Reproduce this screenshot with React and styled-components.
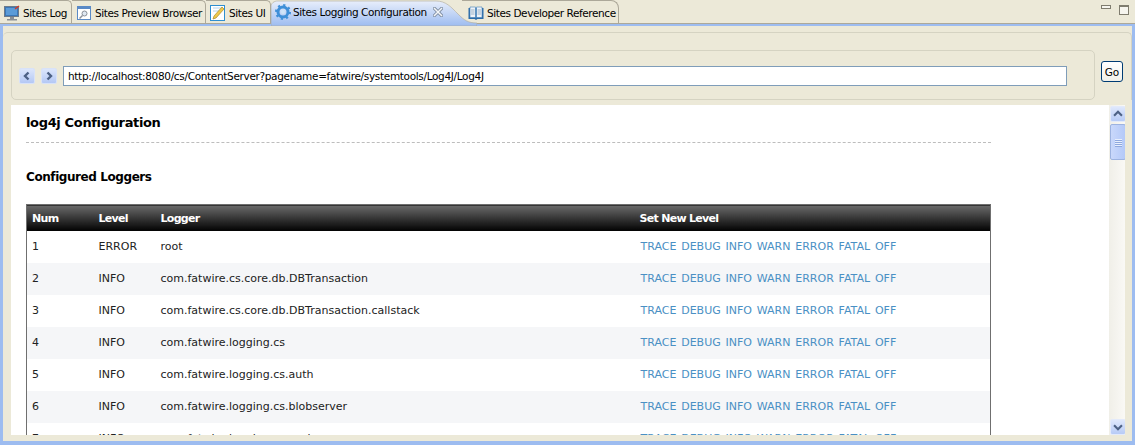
import React from "react"
import styled, { createGlobalStyle } from "styled-components"

const loggers = [
  ["1", "ERROR", "root"],
  ["2", "INFO", "com.fatwire.cs.core.db.DBTransaction"],
  ["3", "INFO", "com.fatwire.cs.core.db.DBTransaction.callstack"],
  ["4", "INFO", "com.fatwire.logging.cs"],
  ["5", "INFO", "com.fatwire.logging.cs.auth"],
  ["6", "INFO", "com.fatwire.logging.cs.blobserver"],
  ["7", "INFO", "com.fatwire.logging.cs.cache"],
]
const levels = ["TRACE", "DEBUG", "INFO", "WARN", "ERROR", "FATAL", "OFF"]

const LogIcon = () => (
  <svg width="16" height="16" viewBox="0 0 16 16">
    <rect x="0.5" y="1.5" width="14" height="10" fill="#3b78b8" stroke="#6c7a8a" />
    <rect x="2" y="3" width="11" height="7" fill="#5b9bd8" />
    <path d="M6 12h4v2H6zM3 14h10v1.5H3z" fill="#8a8f96" />
    <path d="M11 4l4-3" stroke="#d23c2a" strokeWidth="1.5" />
  </svg>
)
const BrowserIcon = () => (
  <svg width="16" height="16" viewBox="0 0 16 16">
    <rect x="1.5" y="1.5" width="13" height="13" fill="#fff" stroke="#5a8ac6" />
    <rect x="1.5" y="1.5" width="13" height="2.5" fill="#5a8ac6" />
    <circle cx="8.5" cy="8.5" r="2.5" fill="#dfe8f2" stroke="#8a9099" />
    <path d="M6.5 10.5L3.5 13.5" stroke="#8a9099" strokeWidth="1.5" />
  </svg>
)
const EditIcon = () => (
  <svg width="16" height="16" viewBox="0 0 16 16">
    <rect x="0.5" y="0.5" width="14" height="15" fill="#fff" stroke="#2f8fd0" />
    <path d="M3 3h9M3 6h6" stroke="#b8d4ea" />
    <path d="M3 14l1-3 8-9 2 2-8 9z" fill="#f0c94a" stroke="#a88a2a" strokeWidth="0.7" />
  </svg>
)
const GearIcon = () => (
  <svg width="16" height="16" viewBox="0 0 16 16">
    <circle cx="8" cy="8" r="5" fill="none" stroke="#3f8fd8" strokeWidth="3" />
    <circle cx="8" cy="8" r="7" fill="none" stroke="#3f8fd8" strokeWidth="2" strokeDasharray="2.2 3.3" />
    <circle cx="8" cy="8" r="2" fill="#cfe4f8" />
  </svg>
)
const BookIcon = () => (
  <svg width="16" height="16" viewBox="0 0 16 16">
    <path d="M0.5 3h15v11h-6l-1.5 1-1.5-1h-6z" fill="#2c6ca8" />
    <path d="M2 2h5.5v10.500H2zM8.500 2H14v10.500H8.500z" fill="#eef3f8" stroke="#3f7fb8" strokeWidth="0.6" />
    <path d="M3 5h3.500M3 7h3.500M3 9h3.500M9.500 5H13M9.500 7H13M9.500 9H13" stroke="#9db4c8" />
  </svg>
)
const CloseIcon = () => (
  <svg width="10" height="10" viewBox="0 0 10 10">
    <path d="M1.500 1.500l7 7M8.500 1.500l-7 7" stroke="#7f8ea3" strokeWidth="3.200" strokeLinecap="square" />
    <path d="M1.500 1.500l7 7M8.500 1.500l-7 7" stroke="#f4f6f8" strokeWidth="1.500" strokeLinecap="square" />
  </svg>
)
const Chevron = ({ dir }) => {
  const paths = {
    left: "M8.500 3.500L5 7l3.500 3.500",
    right: "M5.500 3.500L9 7l-3.500 3.500",
    up: "M3.500 9L8 4.500 12.500 9",
    down: "M3.500 5L8 9.500 12.500 5",
  }
  return (
    <svg width={dir === "left" || dir === "right" ? 14 : 16} height="14" viewBox={dir === "left" || dir === "right" ? "0 0 14 14" : "0 0 16 14"}>
      <path d={paths[dir]} fill="none" stroke="#4d6185" strokeWidth="2.400" />
    </svg>
  )
}

export default function App() {
  return (
    <>
      <GlobalStyle />
      <Window>
        <TabBar>
          <Tab $width={72}><LogIcon /><span>Sites Log</span></Tab>
          <Tab $width={134}><BrowserIcon /><span>Sites Preview Browser</span></Tab>
          <Tab $width={65}><EditIcon /><span>Sites UI</span></Tab>
          <ActiveTab>
            <ActiveShape width="206" height="26" viewBox="0 0 206 26">
              <defs>
                <linearGradient id="activeTabFill" x1="0" y1="0" x2="0" y2="1">
                  <stop offset="0" stopColor="#e8eefb" />
                  <stop offset="1" stopColor="#9dbcf0" />
                </linearGradient>
              </defs>
              <path
                d="M0 26V7C0 3 3 1 7 1H165C175 1 180 7 187 14C193 20 197 23 206 23V26Z"
                fill="url(#activeTabFill)"
                stroke="#aca899"
                strokeWidth="0.6"
              />
            </ActiveShape>
            <GearIcon />
            <ActiveLabel>Sites Logging Configuration</ActiveLabel>
            <CloseIcon />
          </ActiveTab>
          <LastTab><BookIcon /><span>Sites Developer Reference</span></LastTab>
          <ViewControls>
            <MinimizeBox />
            <MaximizeBox />
          </ViewControls>
        </TabBar>
        <Frame>
          <Panel>
            <ToolbarRow>
              <ToolbarGroup>
                <NavButton aria-label="Back"><Chevron dir="left" /></NavButton>
                <NavButton aria-label="Forward"><Chevron dir="right" /></NavButton>
                <UrlInput readOnly value="http://localhost:8080/cs/ContentServer?pagename=fatwire/systemtools/Log4J/Log4J" />
              </ToolbarGroup>
              <GoButton>Go</GoButton>
            </ToolbarRow>
            <BrowserArea>
              <Page>
                <Title>log4j Configuration</Title>
                <Divider />
                <Subtitle>Configured Loggers</Subtitle>
                <LoggerTable>
                  <thead>
                    <tr>
                      <HeadCell $width={67}>Num</HeadCell>
                      <HeadCell $width={62}>Level</HeadCell>
                      <HeadCell $width={479}>Logger</HeadCell>
                      <HeadCell>Set New Level</HeadCell>
                    </tr>
                  </thead>
                  <tbody>
                    {loggers.map(([num, level, name]) => (
                      <Row key={num}>
                        <Cell>{num}</Cell>
                        <Cell>{level}</Cell>
                        <Cell>{name}</Cell>
                        <LinkCell>
                          {levels.map((l) => (
                            <LevelLink key={l} href="#">{l}</LevelLink>
                          ))}
                        </LinkCell>
                      </Row>
                    ))}
                  </tbody>
                </LoggerTable>
              </Page>
              <ScrollBar>
                <ScrollButton><Chevron dir="up" /></ScrollButton>
                <ScrollThumb>
                  <Grip /><Grip /><Grip /><Grip />
                </ScrollThumb>
                <ScrollSpacer />
                <ScrollButton><Chevron dir="down" /></ScrollButton>
              </ScrollBar>
            </BrowserArea>
          </Panel>
        </Frame>
      </Window>
    </>
  )
}

const GlobalStyle = createGlobalStyle`
  html, body {
    margin: 0;
    padding: 0;
    background: #ece9d8;
  }
  * {
    box-sizing: border-box;
  }
`
const Window = styled.div`
  width: 1135px;
  height: 445px;
  overflow: hidden;
  display: flex;
  flex-direction: column;
  background: #ece9d8;
  font-family: "DejaVu Sans", "Liberation Sans", sans-serif;
  font-size: 11px;
  color: #000;
`
const TabBar = styled.div`
  height: 24px;
  flex: none;
  display: flex;
  align-items: stretch;
  font-size: 10.5px;
  letter-spacing: -0.42px;
  border-bottom: 1px solid #aca899;
`
const Tab = styled.div`
  width: ${(p) => p.$width}px;
  height: 24px;
  flex: none;
  display: flex;
  align-items: center;
  gap: 3px;
  padding-left: 4px;
  white-space: nowrap;
  border-right: 1px solid #aca899;
  border-top: 1px solid #aca899;
  border-top-right-radius: 5px;
`
const ActiveTab = styled.div`
  position: relative;
  z-index: 1;
  width: 191px;
  height: 26px;
  flex: none;
  display: flex;
  align-items: center;
  padding: 0 0 3px 4px;
  white-space: nowrap;
`
const ActiveShape = styled.svg`
  position: absolute;
  inset: 0;
  z-index: -1;
`
const ActiveLabel = styled.span`
  width: 140px;
  margin-left: 2px;
`
const LastTab = styled(Tab)`
  width: 157px;
  padding-left: 6px;
  border-top-right-radius: 8px;
`
const ViewControls = styled.div`
  flex: 1;
  display: flex;
  justify-content: flex-end;
  align-items: flex-start;
  gap: 8px;
  padding: 5px 6px 0 0;
`
const MinimizeBox = styled.div`
  width: 10px;
  height: 4px;
  border: 1px solid #7f7c6e;
  background: #f6f5ee;
`
const MaximizeBox = styled.div`
  width: 10px;
  height: 10px;
  border: 1px solid #7f7c6e;
  border-top-width: 2px;
  background: #f6f5ee;
`
const Frame = styled.div`
  flex: 1;
  min-height: 0;
  padding: 2px 3px 4px 3px;
  background: #9dbcf0;
`
const Panel = styled.div`
  height: 100%;
  background: #ece9d8;
  display: flex;
  flex-direction: column;
  padding: 6px 0 6px 0;
`
const ToolbarRow = styled.div`
  flex: none;
  display: flex;
  align-items: flex-start;
  padding: 17px 8px 0 8px;
  border-top: 1px solid #d5d3c2;
  border-right: 1px solid #d5d3c2;
  border-top-right-radius: 5px;
  border-top-left-radius: 5px;
`
const ToolbarGroup = styled.div`
  width: 1084px;
  height: 50px;
  flex: none;
  display: flex;
  align-items: center;
  gap: 6px;
  padding: 2px 0 0 7px;
  border: 1px solid #d5d3c2;
  border-radius: 5px;
`
const NavButton = styled.button`
  width: 16px;
  height: 16px;
  padding: 0;
  display: flex;
  align-items: center;
  justify-content: center;
  background: linear-gradient(#dce6fb, #b4c8f5);
  border: 1px solid #d8e2f8;
  border-radius: 2px;
`
const UrlInput = styled.input`
  width: 1004px;
  height: 20px;
  padding: 0 4px;
  font: inherit;
  font-size: 10.5px;
  letter-spacing: -0.33px;
  background: #fff;
  border: 1px solid #7f9db9;
  outline: none;
`
const GoButton = styled.button`
  width: 23px;
  height: 21px;
  margin: 11px 0 0 6px;
  padding: 0;
  font: inherit;
  font-size: 10.5px;
  background: linear-gradient(#fff, #f2f1ea);
  border: 1px solid #003c74;
  border-radius: 3px;
`
const BrowserArea = styled.div`
  flex: 1;
  min-height: 0;
  display: flex;
  margin: 5px 7px 0 8px;
  overflow: hidden;
`
const Page = styled.div`
  flex: none;
  width: 1098px;
  background: #fff;
  padding: 0 0 0 15px;
  overflow: hidden;
`
const Title = styled.h1`
  margin: 9px 0 0;
  font-size: 13px;
  line-height: 17px;
  font-weight: bold;
  letter-spacing: -0.35px;
`
const Divider = styled.div`
  width: 965px;
  margin-top: 11px;
  border-top: 1px dashed #bdbdbd;
`
const Subtitle = styled.h2`
  margin: 27px 0 0;
  font-size: 12px;
  line-height: 15px;
  font-weight: bold;
  letter-spacing: -0.42px;
`
const LoggerTable = styled.table`
  width: 965px;
  margin-top: 19px;
  border-collapse: collapse;
  table-layout: fixed;
  border: 1px solid #6f6f6f;
  font-size: 11px;
`
const HeadCell = styled.th`
  width: ${(p) => (p.$width ? `${p.$width}px` : "auto")};
  height: 26px;
  padding: 2px 0 0 5px;
  text-align: left;
  font-weight: bold;
  letter-spacing: -0.7px;
  color: #fff;
  background: linear-gradient(#6a6a6a, #000);
`
const Row = styled.tr`
  height: 32px;
  &:nth-child(even) {
    background: #f5f6f8;
  }
`
const Cell = styled.td`
  padding: 0 0 0 5px;
  white-space: nowrap;
  color: #222;
`
const LinkCell = styled(Cell)`
  padding-left: 6px;
`
const LevelLink = styled.a`
  margin-right: 4.8px;
  color: #4a90c4;
  text-decoration: none;
`
const ScrollBar = styled.div`
  width: 18px;
  flex: none;
  display: flex;
  flex-direction: column;
  padding: 1px 1px 0;
  background: linear-gradient(90deg, #f0efe8, #fbfaf7);
`
const ScrollButton = styled.div`
  width: 16px;
  height: 16px;
  flex: none;
  display: flex;
  align-items: center;
  justify-content: center;
  background: linear-gradient(#dfe8fc, #b7cbf6);
  border: 1px solid #e3eafa;
  border-radius: 2px;
`
const ScrollThumb = styled.div`
  width: 16px;
  height: 36px;
  flex: none;
  margin-top: 2px;
  display: flex;
  flex-direction: column;
  align-items: center;
  justify-content: center;
  gap: 1px;
  background: linear-gradient(90deg, #c9d8fb, #b4c9f8);
  border: 1px solid #9db3e0;
  border-radius: 2px;
`
const Grip = styled.div`
  width: 7px;
  height: 1px;
  background: #e8effd;
  box-shadow: 0 1px 0 #8ea8de;
`
const ScrollSpacer = styled.div`
  flex: 1;
`
